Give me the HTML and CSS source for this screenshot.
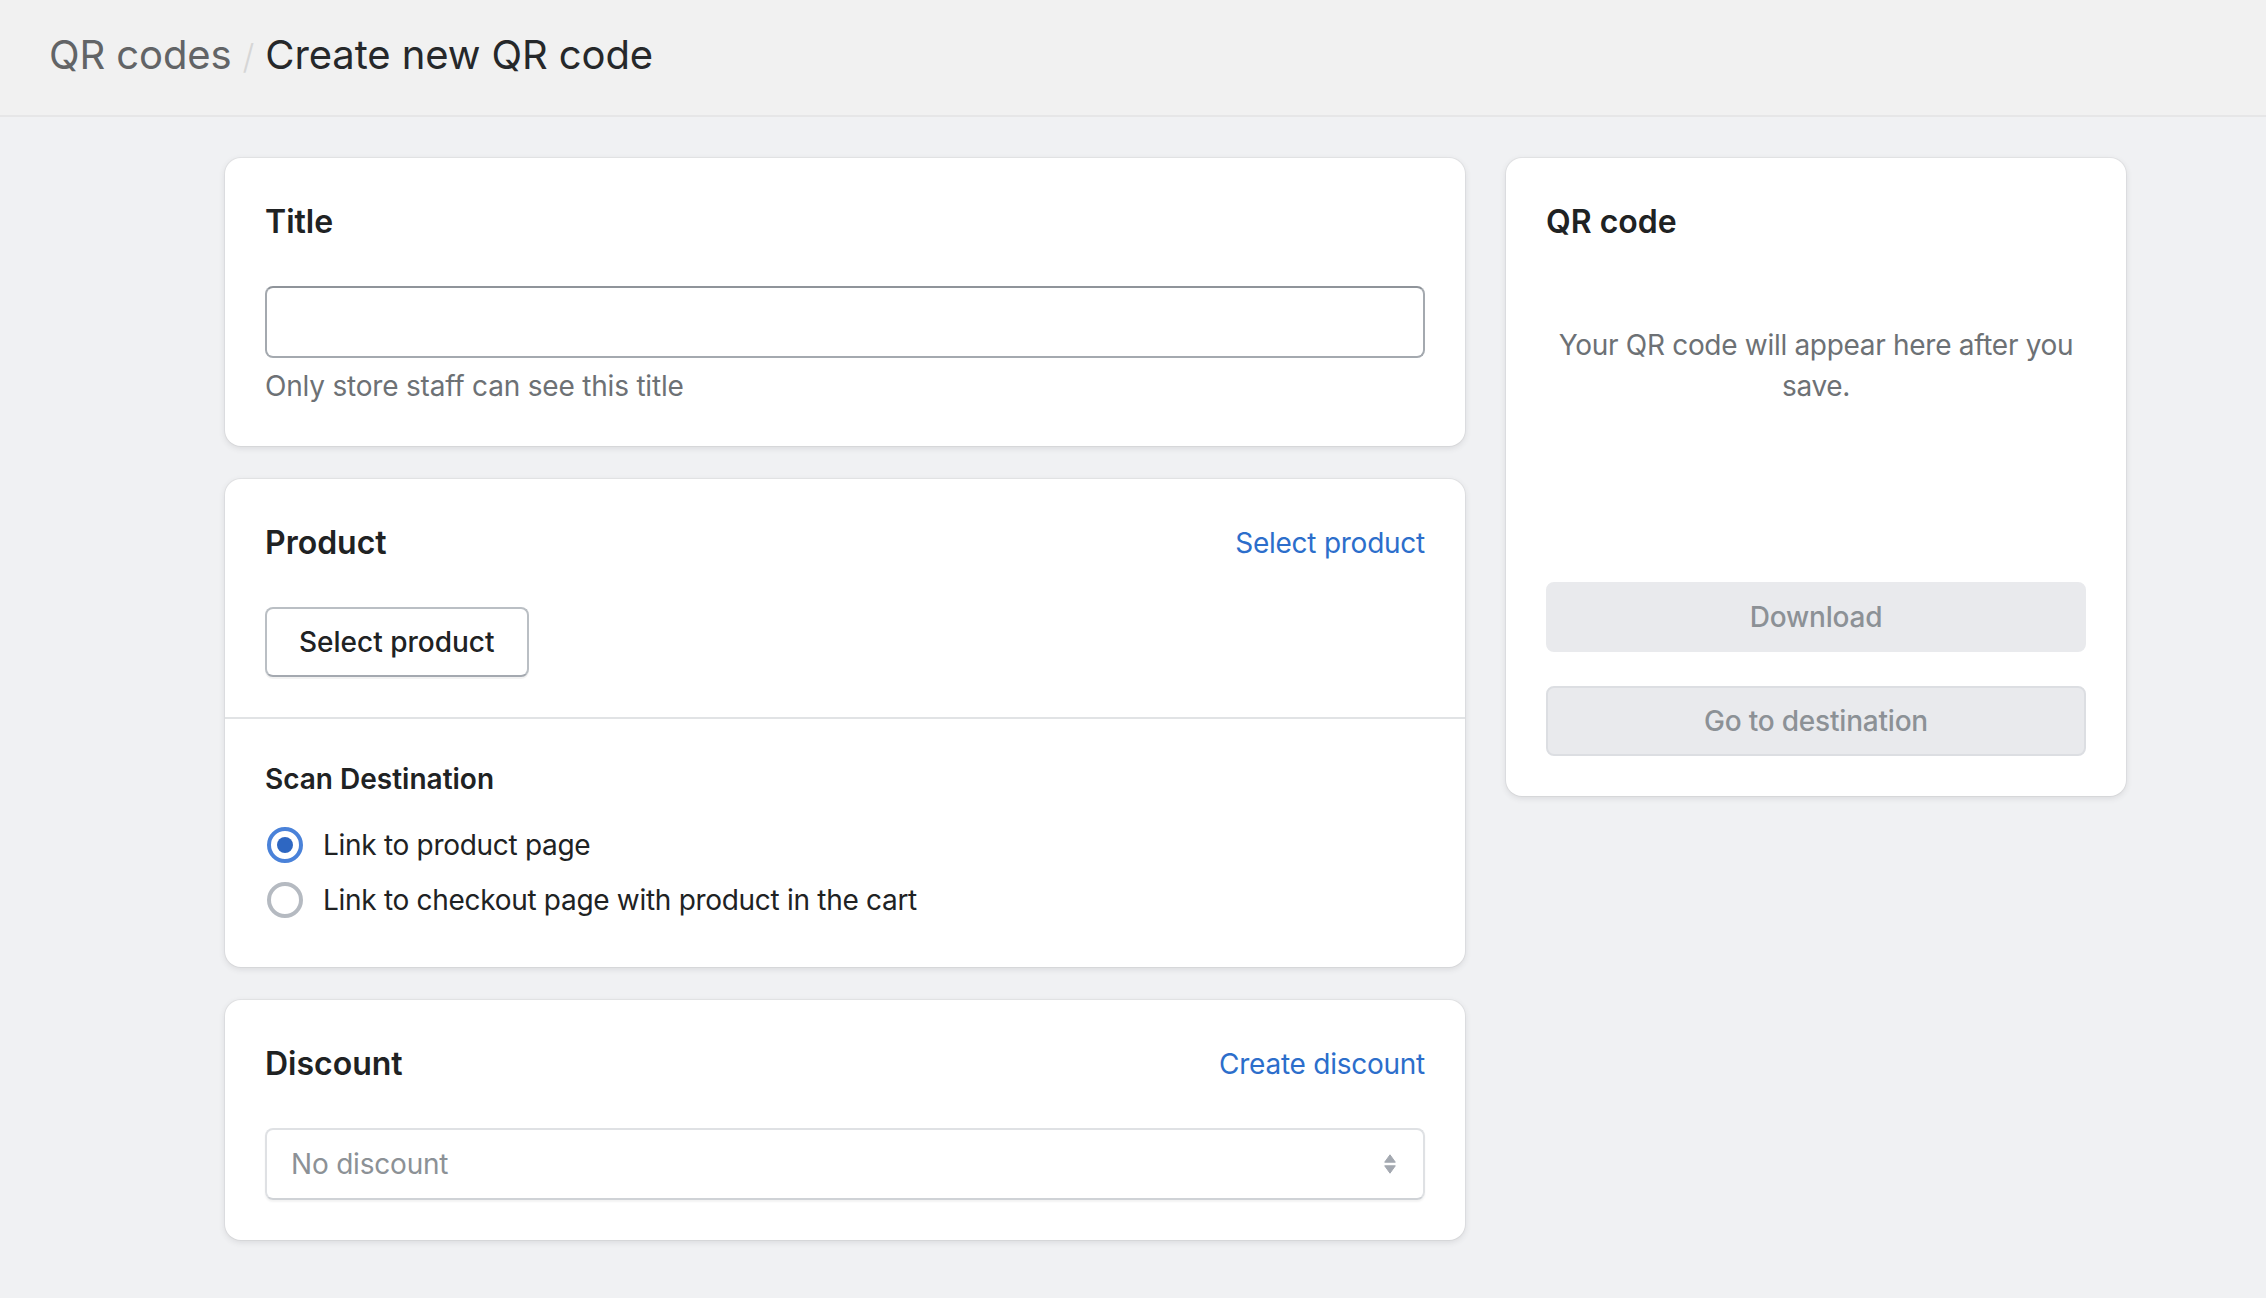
FILE: index.html
```html
<!DOCTYPE html>
<html lang="en">
<head>
<meta charset="utf-8">
<title>Create new QR code</title>
<link rel="stylesheet" href="styles.css">
</head>
<body>
<header class="topbar">
  <nav class="breadcrumb">
    <span class="crumb">QR codes</span>
    <span class="sep">/</span>
    <h1 class="page-title">Create new QR code</h1>
  </nav>
</header>
<main class="layout">
  <div class="primary">
    <section class="card">
      <div class="card-section">
        <h2 class="card-title">Title</h2>
        <input class="text-field" type="text" aria-label="Title">
        <p class="help">Only store staff can see this title</p>
      </div>
    </section>

    <section class="card">
      <div class="card-section">
        <div class="card-header">
          <h2 class="card-title">Product</h2>
          <a class="link" href="#">Select product</a>
        </div>
        <button class="btn" type="button">Select product</button>
      </div>
      <div class="card-section">
        <h3 class="sub-title">Scan Destination</h3>
        <ul class="choices">
          <li class="choice"><span class="radio checked"></span><span>Link to product page</span></li>
          <li class="choice"><span class="radio"></span><span>Link to checkout page with product in the cart</span></li>
        </ul>
      </div>
    </section>

    <section class="card">
      <div class="card-section">
        <div class="card-header">
          <h2 class="card-title">Discount</h2>
          <a class="link" href="#">Create discount</a>
        </div>
        <div class="select">
          <span>No discount</span>
          <svg class="select-arrows" width="14" height="22" viewBox="0 0 14 22" aria-hidden="true">
            <path d="M7 1.8 L12.3 9.2 H1.7 Z" fill="#a3a8b0" stroke="#a3a8b0" stroke-width="1" stroke-linejoin="round"/>
            <path d="M7 20.2 L12.3 12.8 H1.7 Z" fill="#a3a8b0" stroke="#a3a8b0" stroke-width="1" stroke-linejoin="round"/>
          </svg>
        </div>
      </div>
    </section>
  </div>

  <aside class="secondary">
    <section class="card">
      <div class="card-section">
        <h2 class="card-title">QR code</h2>
        <p class="empty-text">Your QR code will appear here after you save.</p>
        <div class="actions">
          <button class="btn-disabled" type="button" disabled>Download</button>
          <button class="btn-disabled bordered" type="button" disabled>Go to destination</button>
        </div>
      </div>
    </section>
  </aside>
</main>
</body>
</html>
```

FILE: styles.css
```css
* {
  box-sizing: border-box;
}

body {
  margin: 0;
  min-height: 1298px;
  font-family: Inter, "Noto Sans", sans-serif;
  background: #f0f1f3;
  color: #202223;
}

.topbar {
  height: 117px;
  background: #f1f1f1;
  border-bottom: 2px solid #e6e6e7;
  display: flex;
  align-items: center;
  padding: 0 0 4px 49px;
}

.breadcrumb {
  display: flex;
  align-items: baseline;
  font-size: 40px;
  line-height: 48px;
  letter-spacing: -0.1px;
}

.crumb {
  color: #626466;
}

.sep {
  color: #d6d6d6;
  font-size: 34px;
  font-weight: 300;
  margin: 0 11px 0 11px;
}

.page-title {
  margin: 0;
  font-size: 40px;
  font-weight: 400;
  color: #26282a;
}

.layout {
  display: grid;
  grid-template-columns: 1240px 620px;
  column-gap: 41px;
  padding: 41px 0 40px 225px;
  align-items: start;
}

.primary {
  display: flex;
  flex-direction: column;
  gap: 33px;
}

.card {
  background: #ffffff;
  border-radius: 16px;
  box-shadow: 0 0 0 1px rgba(63, 63, 68, 0.05), 0 2px 6px rgba(63, 63, 68, 0.14);
}

.card-section {
  padding: 40px;
}

.card-section + .card-section {
  border-top: 2px solid #e1e3e5;
}

.card-title {
  margin: 0;
  font-size: 32px;
  line-height: 48px;
  font-weight: 600;
  color: #202223;
}

.card-header {
  display: flex;
  justify-content: space-between;
  align-items: center;
}

.link {
  color: #2c6ecb;
  font-size: 28px;
  line-height: 40px;
  letter-spacing: -0.25px;
  text-decoration: none;
}

.text-field {
  display: block;
  width: 100%;
  height: 72px;
  margin-top: 40px;
  border: 2px solid #a4a9af;
  border-top-color: #8f949a;
  border-radius: 8px;
  background: #fff;
  font: inherit;
  font-size: 28px;
  padding: 0 24px;
}

.help {
  margin: 8px 0 0;
  font-size: 28px;
  line-height: 40px;
  letter-spacing: -0.2px;
  color: #6d7175;
}

.btn {
  display: block;
  margin-top: 40px;
  height: 70px;
  padding: 0 32px;
  font-family: inherit;
  font-size: 28px;
  font-weight: 500;
  color: #202223;
  background: #ffffff;
  border: 2px solid #babfc4;
  border-bottom-color: #a4a9b0;
  border-radius: 8px;
  box-shadow: 0 2px 0 rgba(0, 0, 0, 0.05);
}

.sub-title {
  margin: 0 0 18px;
  font-size: 28px;
  line-height: 40px;
  font-weight: 600;
  color: #202223;
}

.choices {
  list-style: none;
  margin: 0;
  padding: 0;
}

.choice {
  display: flex;
  align-items: center;
  gap: 20px;
  height: 55px;
  font-size: 28px;
  letter-spacing: -0.3px;
  color: #202223;
}

.radio {
  position: relative;
  flex: none;
  width: 36px;
  height: 36px;
  margin-left: 2px;
  border-radius: 50%;
  border: 4px solid #b5bac1;
  background: #fff;
}

.radio.checked {
  border-color: #4a82d9;
}

.radio.checked::after {
  content: "";
  position: absolute;
  left: 50%;
  top: 50%;
  width: 16px;
  height: 16px;
  margin: -8px 0 0 -8px;
  border-radius: 50%;
  background: #2e67c2;
}

.select {
  display: flex;
  align-items: center;
  justify-content: space-between;
  margin-top: 40px;
  height: 72px;
  padding: 0 26px 0 24px;
  border: 2px solid #dfe1e4;
  border-bottom-color: #cfd2d6;
  border-radius: 8px;
  box-shadow: 0 2px 2px rgba(0, 0, 0, 0.05);
  font-size: 28px;
  letter-spacing: -0.2px;
  color: #8c9196;
}

.select-arrows {
  flex: none;
}

.empty-text {
  margin: 79px 0 0;
  text-align: center;
  font-size: 28px;
  line-height: 41px;
  letter-spacing: -0.3px;
  color: #6d7175;
}

.actions {
  display: flex;
  flex-direction: column;
  gap: 34px;
  margin-top: 175px;
}

.btn-disabled {
  width: 100%;
  height: 70px;
  font-family: inherit;
  font-size: 28px;
  font-weight: 500;
  letter-spacing: -0.2px;
  color: #8c9196;
  background: #e9eaed;
  border: 2px solid #e9eaed;
  border-radius: 8px;
}

.btn-disabled.bordered {
  border-color: #dcdee2;
}
```
